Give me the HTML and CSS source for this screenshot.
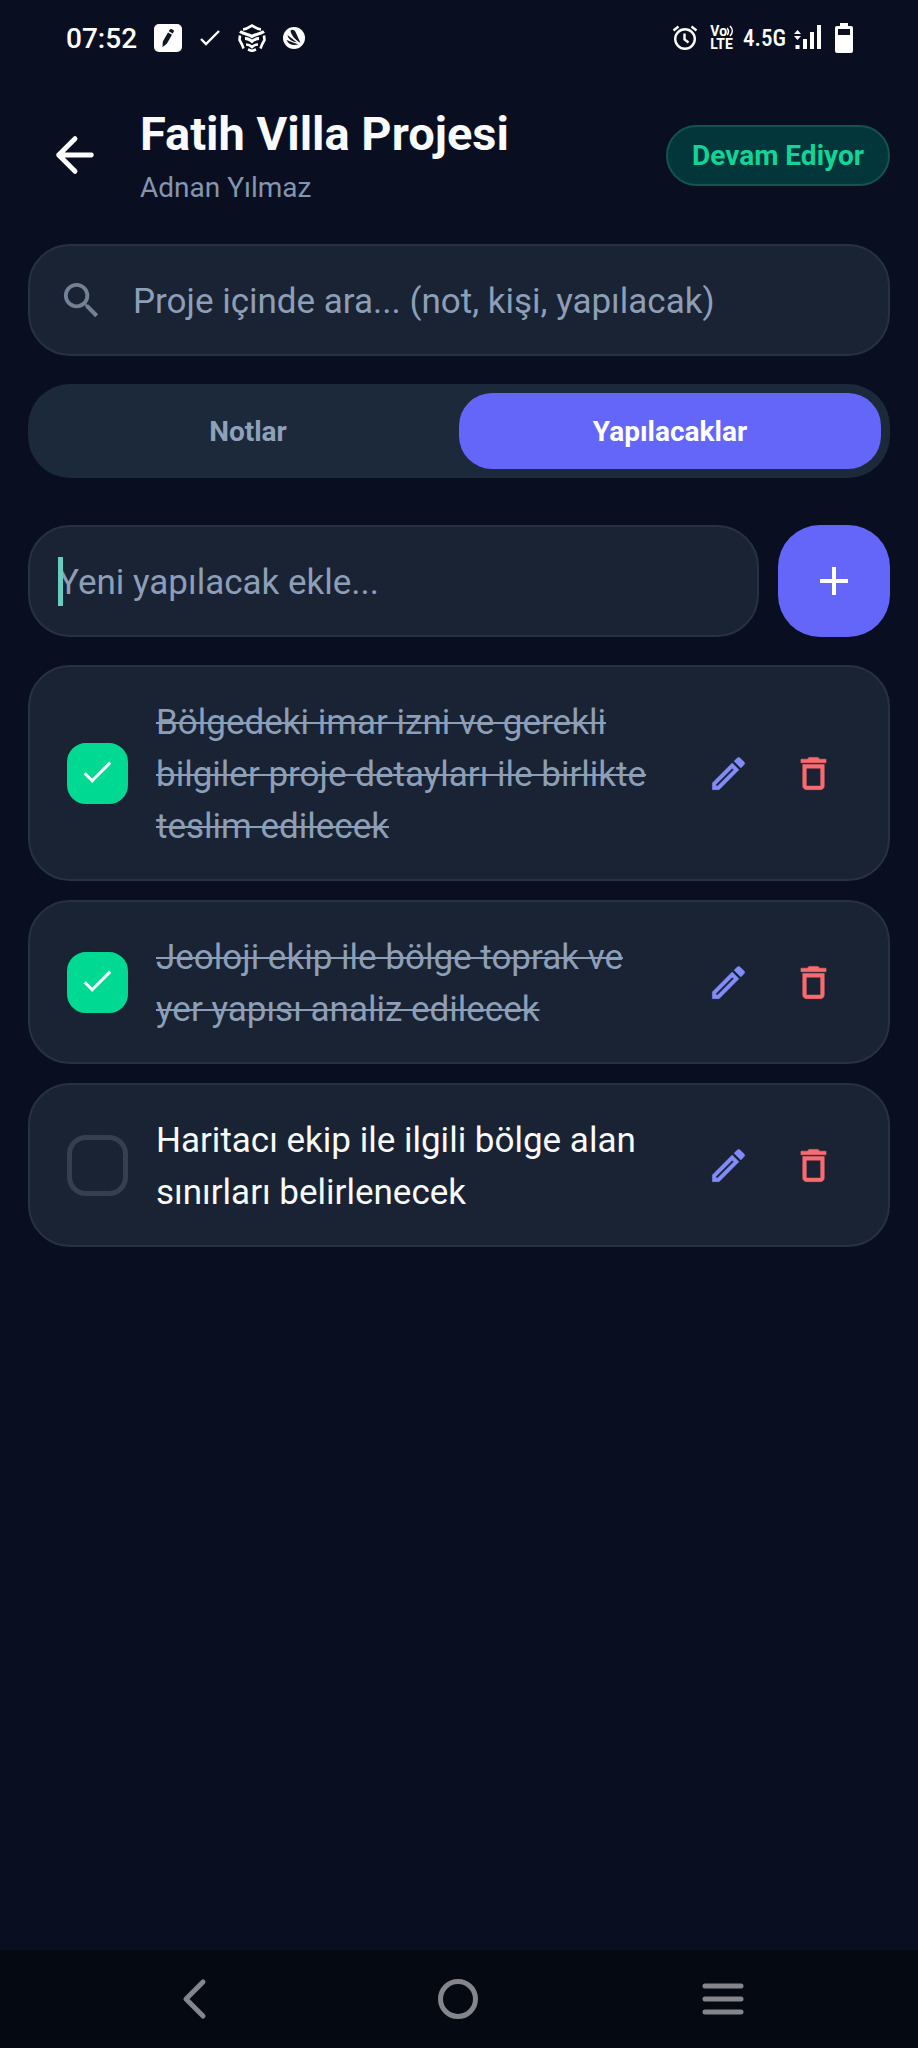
FILE: index.html
```
<!DOCTYPE html>
<html lang="tr">
<head>
	<meta charset="utf-8">
	<meta name="viewport" content="width=device-width, initial-scale=1">
	<title>Fatih Villa Projesi</title>
	<link rel="stylesheet" href="styles.css">
</head>
<body>
	<!-- shared icons -->
	<svg class="sprite" aria-hidden="true">
		<symbol id="pencil" viewBox="0 0 24 24"><path d="M14.06 9.02l.92.92L5.92 19H5v-.92l9.06-9.06M17.66 3c-.25 0-.51.1-.7.29l-1.83 1.83 3.75 3.75 1.83-1.83c.39-.39.39-1.02 0-1.41l-2.34-2.34c-.2-.2-.45-.29-.71-.29zm-3.6 3.19L3 17.25V21h3.75L17.81 9.94l-3.75-3.75z"/></symbol>
		<symbol id="trash" viewBox="0 0 24 24"><path d="M6 19c0 1.1.9 2 2 2h8c1.1 0 2-.9 2-2V7H6v12zM8 9h8v10H8V9zm7.500-5l-1-1h-5l-1 1H5v2h14V4h-3.500z"/></symbol>
	</svg>

	<div class="statusbar">
		<div class="status-left">
			<span class="clock">07:52</span>
			<svg class="st-note" viewBox="0 0 28 28"><rect width="28" height="28" rx="5" fill="#fff"/><path d="M10 22l-1.500 1 .3-5.500 5.200-9 4 2.300-5.200 9zM14.800 7.200l1-1.700c.4-.6 1.100-.8 1.700-.4l1.800 1c.6.400.8 1.100.4 1.700l-1 1.700z" fill="#101626"/></svg>
			<svg class="st-check" viewBox="0 0 22 18"><path d="M2 10l5 5L20 2" fill="none" stroke="#fff" stroke-width="2.400"/></svg>
			<svg class="st-bug" viewBox="0 0 28 28" fill="none" stroke="#fff" stroke-width="2.600"><path d="M5 5.500c4-.5 6-2 9-4 3 2 5 3.500 9 4"/><path d="M2 7.500c4 3 9 2.500 12 5 3-2.500 8-2 12-5" stroke-width="3"/><path d="M7 14.500c3 0 5 1 7 3 2-2 4-3 7-3" stroke-width="3"/><path d="M8 20.500c3 0 4 .5 6 2.500 2-2 3-2.500 6-2.500"/><path d="M2 11.500l-.5 4.500 2.500 4.500 1.500 4M26 11.500l.5 4.500-2.500 4.500-1.500 4M10 25.500l4 1.500 4-1.500"/></svg>
			<svg class="st-avast" viewBox="0 0 22 22"><circle cx="11" cy="11" r="11" fill="#fff"/><path d="M7.500 3.500C9 2 12 3 13 6l4.500 10C12 12.500 8 8 7.500 3.500zM4.500 8L14 15.500C9 14.500 5 12 4.500 8zM3.500 13l12 4.500C9.500 19 5 17 3.500 13z" fill="#101626"/></svg>
		</div>
		<div class="status-right">
			<svg class="st-alarm" viewBox="0 0 26 26" fill="none" stroke="#fff" stroke-width="2.400"><circle cx="13" cy="14" r="9.800"/><path d="M12.500 8.500v6l4 3M1.500 5.500l5-4M24.500 5.500l-5-4"/></svg>
			<span class="volte">
				<span class="vo">Vo<svg viewBox="0 0 8 12" fill="none" stroke="#fff" stroke-width="1.600"><path d="M0 3c2 2 2 5 0 7M3 1c3 3 3 7 0 10"/></svg></span>
				<span>LTE</span>
			</span>
			<span class="network">4.5G</span>
			<svg class="st-signal" viewBox="0 0 28 26" fill="#fff"><path d="M0 9l3.500-4L7 9zM0 11l3.500 4L7 11zM1.500 20h4v4h-4zM9 14h4v10H9zM16 7h4v17h-4zM23 0h4v24h-4z"/></svg>
			<svg class="st-battery" viewBox="0 0 20 32"><path d="M6 1h8v3h3a2 2 0 0 1 2 2v23a2 2 0 0 1-2 2H3a2 2 0 0 1-2-2V6a2 2 0 0 1 2-2h3z" fill="#fff"/><path d="M4 7h12v6H4z" fill="#0a1020"/></svg>
		</div>
	</div>

	<header class="header">
		<button class="back" type="button" aria-label="Geri">
			<svg viewBox="0 0 24 24" fill="none" stroke="#fff" stroke-width="2.100" stroke-linecap="round" stroke-linejoin="round"><path d="M19 12H5M12 5l-7 7 7 7"/></svg>
		</button>
		<div class="heading">
			<h1>Fatih Villa Projesi</h1>
			<p>Adnan Yılmaz</p>
		</div>
		<span class="badge">Devam Ediyor</span>
	</header>

	<main class="content">
		<label class="field search">
			<svg viewBox="0 0 24 24"><path d="M15.500 14h-.79l-.28-.27C15.410 12.590 16 11.110 16 9.500 16 5.910 13.090 3 9.500 3S3 5.910 3 9.500 5.910 16 9.500 16c1.610 0 3.090-.59 4.230-1.570l.27.28v.79l5 4.990L20.490 19l-4.990-5zm-6 0C7.010 14 5 11.990 5 9.500S7.010 5 9.500 5 14 7.010 14 9.500 11.990 14 9.500 14z"/></svg>
			<input type="text" aria-label="Proje içinde ara" placeholder="Proje içinde ara... (not, kişi, yapılacak)">
		</label>

		<div class="tabs" role="tablist">
			<button class="tab" type="button" role="tab" aria-selected="false">Notlar</button>
			<button class="tab active" type="button" role="tab" aria-selected="true">Yapılacaklar</button>
		</div>

		<form class="add-row">
			<label class="field new-todo">
				<span class="caret"></span>
				<input type="text" aria-label="Yeni yapılacak" placeholder="Yeni yapılacak ekle...">
			</label>
			<button class="add" type="button" aria-label="Ekle">
				<svg viewBox="0 0 28 28"><path d="M14 0v28M0 14h28" stroke="#fff" stroke-width="4"/></svg>
			</button>
		</form>

		<ul class="todos">
			<li class="todo">
				<input type="checkbox" id="todo1" checked>
				<label for="todo1">Bölgedeki imar izni ve gerekli bilgiler proje detayları ile birlikte teslim edilecek</label>
				<div class="actions">
					<button class="edit" type="button" aria-label="Düzenle"><svg><use href="#pencil"/></svg></button>
					<button class="delete" type="button" aria-label="Sil"><svg><use href="#trash"/></svg></button>
				</div>
			</li>
			<li class="todo">
				<input type="checkbox" id="todo2" checked>
				<label for="todo2">Jeoloji ekip ile bölge toprak ve yer yapısı analiz edilecek</label>
				<div class="actions">
					<button class="edit" type="button" aria-label="Düzenle"><svg><use href="#pencil"/></svg></button>
					<button class="delete" type="button" aria-label="Sil"><svg><use href="#trash"/></svg></button>
				</div>
			</li>
			<li class="todo">
				<input type="checkbox" id="todo3">
				<label for="todo3">Haritacı ekip ile ilgili bölge alan sınırları belirlenecek</label>
				<div class="actions">
					<button class="edit" type="button" aria-label="Düzenle"><svg><use href="#pencil"/></svg></button>
					<button class="delete" type="button" aria-label="Sil"><svg><use href="#trash"/></svg></button>
				</div>
			</li>
		</ul>
	</main>

	<nav class="navbar">
		<button type="button" aria-label="Geri"><svg viewBox="0 0 44 44"><path d="M32 5L15 22l17 17"/></svg></button>
		<button type="button" aria-label="Ana ekran"><svg viewBox="0 0 44 44"><circle cx="22" cy="22" r="17.500"/></svg></button>
		<button type="button" aria-label="Menü"><svg viewBox="0 0 44 44"><path d="M4 9h36M4 22h36M4 35h36"/></svg></button>
	</nav>
</body>
</html>
```
FILE: styles.css
```
* {box-sizing:border-box;}
body {
	margin: 0;
	min-height: 100vh;
	display: flex;
	flex-direction: column;
	background: #090f20;
	color: #f8fafc;
	font-family: Roboto, "Noto Sans", sans-serif;
	font-size: 35px;
}
h1, p, ul {margin:0; padding:0;}
button {
	display: flex;
	align-items: center;
	justify-content: center;
	padding: 0;
	border: 0;
	background: none;
	color: inherit;
	font: inherit;
}
svg {display:block; flex:none;}
.sprite {
	position: absolute;
	width: 0;
	height: 0;
}

/* status bar */
.statusbar {
	display: flex;
	justify-content: space-between;
	height: 76px;
	padding: 0 64px 0 66px;
	color: #fff;
}
.status-left, .status-right {display:flex; align-items:center;}
.status-left {gap:17px;}
.status-right {gap:8px;}
.clock {font-size:28px; font-weight:500;}
.st-note {width:28px; height:28px;}
.st-check {width:22px; height:18px;}
.st-bug {width:28px; height:28px;}
.st-avast {width:22px; height:22px;}
.st-alarm {width:26px; height:26px; margin-right:4px;}
.volte {
	display: flex;
	flex-direction: column;
	font-size: 14px;
	font-weight: 700;
	line-height: 13px;
}
.vo {display:flex;}
.vo svg {width:8px; height:12px;}
.network {font-family:"Roboto Condensed", Roboto, sans-serif; font-size:23px; font-weight:500;}
.st-signal {width:28px; height:26px;}
.st-battery {width:20px; height:32px; margin-left:4px;}

/* header */
.header {
	display: flex;
	align-items: center;
	padding: 29px 28px 39px 47px;
}
.back svg {width:56px; height:56px;}
.heading {
	flex: 1;
	padding-left: 37px;
}
h1 {
	font-size: 47px;
	font-weight: 700;
	line-height: 58px;
}
.heading p {
	margin-top: 8px;
	color: #8495af;
	font-size: 28px;
	line-height: 34px;
}
.badge {
	padding: 12px 24px;
	border: 2px solid #125550;
	border-radius: 31px;
	background: #03363a;
	color: #12d497;
	font-size: 28px;
	font-weight: 700;
	line-height: 33px;
}

/* content */
.content {
	flex: 1;
	padding: 0 28px;
}
.field {
	display: flex;
	align-items: center;
	height: 112px;
	border: 2px solid #273241;
	border-radius: 42px;
	background: #192333;
}
.field input {
	flex: 1;
	min-width: 0;
	padding: 2px 0 0;
	border: 0;
	outline: 0;
	background: none;
	color: #f8fafc;
	font: inherit;
}
.field input::placeholder {color:#8d9eb7; opacity:1;}
.search {
	gap: 28px;
	padding: 0 28px;
}
.search svg {
	width: 47px;
	height: 47px;
	fill: #748195;
}
.tabs {
	display: flex;
	margin: 28px 0 47px;
	padding: 9px;
	border-radius: 42px;
	background: #1b293b;
}
.tab {
	flex: 1;
	height: 76px;
	border-radius: 33px;
	color: #8fa0b9;
	font-size: 28px;
	font-weight: 700;
}
.tab.active {background:#6366f8; color:#fff;}
.add-row {display:flex; gap:19px;}
.new-todo {
	position: relative;
	flex: 1;
	padding: 0 28px;
}
.caret {
	position: absolute;
	left: 28px;
	width: 5px;
	height: 49px;
	background: #68cdbd;
}
.add {
	width: 112px;
	height: 112px;
	border-radius: 42px;
	background: #6366f8;
}
.add svg {width:28px; height:28px;}

/* todo list */
.todos {
	display: flex;
	flex-direction: column;
	gap: 19px;
	margin-top: 28px;
	list-style: none;
}
.todo {
	display: flex;
	align-items: center;
	padding: 26px 37px;
	border: 2px solid #273241;
	border-radius: 42px;
	background: #192333;
}
.todo input {
	flex: none;
	display: grid;
	place-items: center;
	width: 61px;
	height: 61px;
	margin: 0 28px 0 0;
	border: 5px solid #344052;
	border-radius: 19px;
	appearance: none;
}
.todo input:checked {border-color:#00d991; background:#00d991;}
/* tick mark */
.todo input:checked::before {
	content: "";
	box-sizing: border-box;
	width: 27px;
	height: 12px;
	margin-bottom: 8px;
	border: solid #fff;
	border-width: 0 0 3px 3px;
	transform: rotate(-45deg);
}
.todo label {
	flex: 1;
	padding-top: 4px;
	line-height: 52px;
}
.todo input:checked + label {
	color: #8d9eb7;
	text-decoration: line-through;
	text-decoration-thickness: 2px;
}
.actions {
	display: flex;
	gap: 9px;
	margin-left: 18px;
}
.actions button {width:76px; height:76px;}
.actions svg {width:43px; height:43px;}
.edit {fill:#818cf8; stroke:#818cf8; stroke-width:.3px;}
.delete {fill:#f86b70; stroke:#f86b70; stroke-width:.3px;}

/* bottom navigation */
.navbar {
	display: grid;
	grid-template-columns: repeat(3, 1fr);
	height: 98px;
	padding: 0 62px 0 60px;
	background: #050912;
}
.navbar svg {
	width: 44px;
	height: 44px;
	fill: none;
	stroke: #85868c;
	stroke-width: 5;
	stroke-linecap: round;
	stroke-linejoin: round;
}
```
